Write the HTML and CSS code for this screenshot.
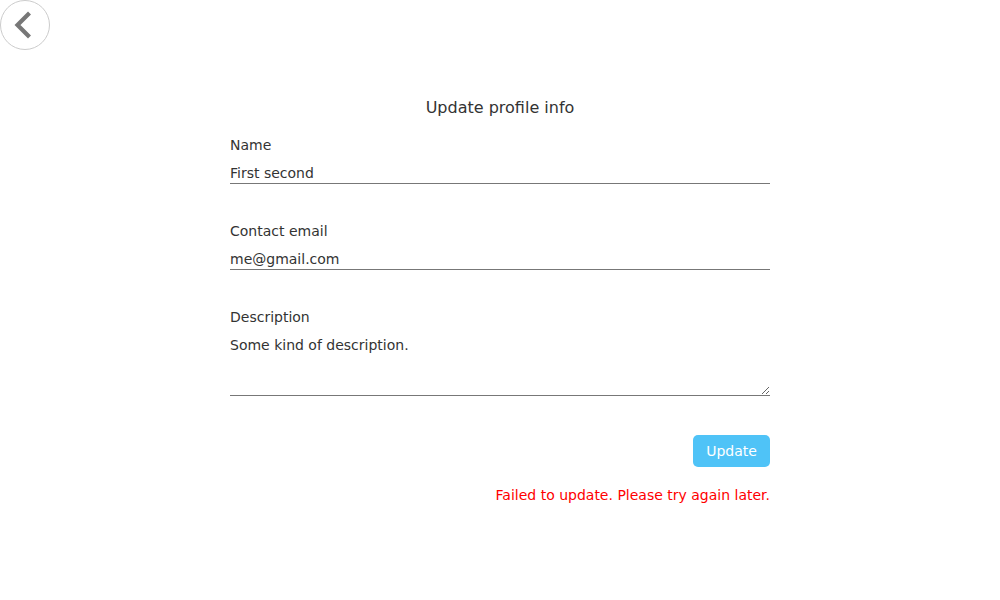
FILE: index.html
```html
<!DOCTYPE html>
<html>
<head>
<meta charset="utf-8">
<link rel="stylesheet" href="styles.css">
</head>
<body>
<button class="back" aria-label="Back">
  <svg width="48" height="48" viewBox="1 1 48 48"><path d="M29.5 13 L17.5 25 L29.5 37" fill="none" stroke="#777" stroke-width="4.2"/></svg>
</button>
<main class="page">
  <h1 class="title">Update profile info</h1>
  <form class="form">
    <label class="field">
      <span class="label">Name</span>
      <input class="input" type="text" value="First second">
    </label>
    <label class="field">
      <span class="label">Contact email</span>
      <input class="input" type="text" value="me@gmail.com">
    </label>
    <label class="field">
      <span class="label">Description</span>
      <textarea class="input area">Some kind of description.</textarea>
    </label>
    <div class="actions">
      <button type="button" class="submit">Update</button>
    </div>
    <p class="error">Failed to update. Please try again later.</p>
  </form>
</main>
</body>
</html>
```
FILE: styles.css
```css
html, body {
  margin: 0;
  padding: 0;
  background: #fff;
  font-family: "DejaVu Sans", sans-serif;
  color: #333;
}
.back {
  position: absolute;
  left: 0;
  top: 0;
  width: 50px;
  height: 50px;
  border-radius: 50%;
  border: 1px solid #ccc;
  background: #fff;
  padding: 0;
  display: flex;
  align-items: center;
  justify-content: center;
  box-sizing: border-box;
}
.page {
  width: 540px;
  margin: 0 auto;
  padding-top: 98px;
}
.title {
  margin: 0 0 18px;
  font-size: 16px;
  font-weight: normal;
  text-align: center;
  line-height: 20px;
}
.form { display: flex; flex-direction: column; }
.field {
  display: flex;
  flex-direction: column;
  margin-bottom: 38px;
}
.label {
  font-size: 14px;
  line-height: 18px;
  margin-bottom: 10px;
}
.input {
  font-family: "DejaVu Sans", sans-serif;
  font-size: 14px;
  color: #333;
  border: none;
  border-bottom: 1px solid #777;
  padding: 0 0 2px;
  line-height: 17px;
  height: 20px;
  outline: none;
  background: transparent;
  box-sizing: border-box;
}
.area {
  height: 60px;
  resize: vertical;
  padding-top: 1px;
}
.actions {
  display: flex;
  justify-content: flex-end;
  margin-top: 1px;
}
.submit {
  width: 77px;
  height: 32px;
  border: none;
  border-radius: 5px;
  background: #4fc3f7;
  color: #fff;
  font-family: "DejaVu Sans", sans-serif;
  font-size: 14px;
  padding: 0;
}
.error {
  margin: 19px 0 0;
  color: #f00;
  font-size: 14px;
  text-align: right;
  line-height: 18px;
}
```
